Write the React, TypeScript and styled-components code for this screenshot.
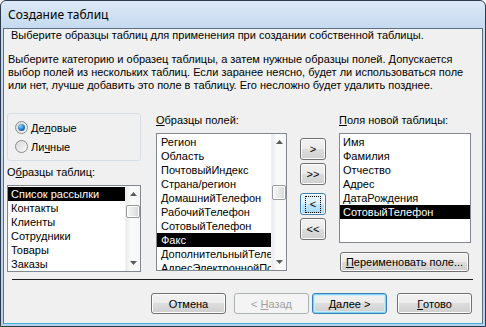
import React from 'react';
import styled, { createGlobalStyle } from 'styled-components';

const GlobalStyle = createGlobalStyle`
  html, body {
    margin: 0;
    padding: 0;
    background: #ffffff;
  }
  * {
    box-sizing: border-box;
  }
`;

const Window = styled.div`
  width: 486px;
  height: 327px;
  display: flex;
  flex-direction: column;
  border: 1px solid #2c3b4c;
  border-radius: 6px 6px 0 0;
  background: linear-gradient(#dce9f7 0px, #c6daf0 27px, #b9d1ec 100%);
  padding: 0 2px 2px 2px;
  font-family: 'Liberation Sans', Arial, sans-serif;
  font-size: 11px;
  color: #000;
  overflow: hidden;
`;

const TitleBar = styled.div`
  height: 27px;
  flex: 0 0 auto;
  display: flex;
  align-items: center;
  padding-left: 5px;
  font-family: 'Noto Sans', 'Open Sans', sans-serif;
  font-size: 12px;
  color: #000;
`;

const Client = styled.div`
  flex: 1 1 auto;
  display: flex;
  flex-direction: column;
  border: 1px solid #5d6f84;
  border-bottom-color: #3fb3d6;
  background: #f0f0f0;
`;

const HeaderText = styled.div`
  line-height: 12px;
  padding-left: 7px;
`;

const Intro = styled.div`
  margin-top: 12px;
  padding-left: 4px;
  line-height: 13px;
  height: 39px;
`;

const Main = styled.div`
  margin-top: 21px;
  padding-left: 3px;
  display: grid;
  grid-template-columns: 136px 131px 26px 132px;
  column-gap: 13px;
  align-items: start;
`;

const Column = styled.div`
  display: flex;
  flex-direction: column;
`;

const LeftColumn = styled(Column)`
  padding-right: 2px;
`;

const GroupBox = styled.div`
  height: 48px;
  border: 1px solid #d5dfe5;
  border-radius: 3px;
  padding: 7px 0 0 7px;
  display: flex;
  flex-direction: column;
  gap: 6px;
`;

const RadioRow = styled.label`
  display: flex;
  align-items: center;
  height: 13px;
  gap: 3px;
`;

const RadioCircle = styled.span<{ checked?: boolean }>`
  width: 13px;
  height: 13px;
  border-radius: 50%;
  border: 1px solid #8a8d90;
  background: linear-gradient(135deg, #d9d9d9, #f8f8f8);
  display: flex;
  align-items: center;
  justify-content: center;

  &:after {
    content: '';
    width: 7px;
    height: 7px;
    border-radius: 50%;
    display: ${({ checked }) => (checked ? 'block' : 'none')};
    background: radial-gradient(circle at 35% 30%, #8fd3ff, #1c70c4 60%, #0b3f7e);
  }
`;

const Label = styled.div<{ top?: number; bottom?: number }>`
  line-height: 13px;
  margin-top: ${({ top }) => top ?? 0}px;
  margin-bottom: ${({ bottom }) => bottom ?? 0}px;
  white-space: nowrap;
`;

const ListBox = styled.div<{ h: number }>`
  height: ${({ h }) => h}px;
  border: 1px solid #828790;
  background: #fff;
  display: flex;
  overflow: hidden;
`;

const Items = styled.div<{ indent?: number }>`
  flex: 1 1 auto;
  min-width: 0;
  padding-top: 1px;
  overflow: hidden;

  & > div {
    padding-left: ${({ indent }) => indent ?? 3}px;
  }
`;

const Item = styled.div<{ selected?: boolean }>`
  height: 14px;
  line-height: 14px;
  white-space: nowrap;
  overflow: hidden;
  background: ${({ selected }) => (selected ? '#000' : 'transparent')};
  color: ${({ selected }) => (selected ? '#fff' : '#000')};
`;

const ScrollBar = styled.div`
  width: 15px;
  flex: 0 0 auto;
  display: flex;
  flex-direction: column;
  background: linear-gradient(90deg, #ececec, #fbfbfb 40%, #f6f6f6);
  border-left: 1px solid #f0f0f0;
`;

const ScrollArrow = styled.div`
  height: 16px;
  flex: 0 0 auto;
  display: flex;
  align-items: center;
  justify-content: center;
`;

const Track = styled.div<{ offset: number }>`
  flex: 1 1 auto;
  padding-top: ${({ offset }) => offset}px;
`;

const Thumb = styled.div<{ h: number }>`
  height: ${({ h }) => h}px;
  border: 1px solid #9a9a9a;
  border-radius: 2px;
  background: linear-gradient(90deg, #f6f6f6, #e8e8e8 50%, #d8d8d8);
  box-shadow: inset 0 0 0 1px #fdfdfd;
`;

const ArrowColumn = styled.div`
  display: flex;
  flex-direction: column;
  padding-top: 25px;
`;

const Button = styled.div<{ w?: number; h?: number; variant?: 'default' | 'disabled' | 'focused' }>`
  width: ${({ w }) => w ?? 75}px;
  height: ${({ h }) => h ?? 21}px;
  display: flex;
  align-items: center;
  justify-content: center;
  border-radius: 3px;
  white-space: pre;
  border: 1px solid
    ${({ variant }) =>
      variant === 'disabled' ? '#adb2b5' : variant === 'default' || variant === 'focused' ? '#3c7fb1' : '#707070'};
  color: ${({ variant }) => (variant === 'disabled' ? '#a0a0a0' : '#000')};
  background: ${({ variant }) =>
    variant === 'disabled'
      ? '#f4f4f4'
      : variant === 'focused'
        ? 'linear-gradient(#eaf6fd, #d9f0fc 50%, #bee6fd 50%, #a7d9f5)'
        : 'linear-gradient(#f2f2f2, #ebebeb 50%, #dddddd 50%, #cfcfcf)'};
  box-shadow: ${({ variant }) =>
    variant === 'default'
      ? 'inset 0 0 0 1px #7ed3f5, inset 0 0 0 2px #c9ecfb'
      : variant === 'disabled'
        ? 'none'
        : 'inset 0 0 0 1px #fcfcfc'};
`;

const FocusRect = styled.span`
  outline: 1px dotted #000;
  padding: 2px 4px;
  line-height: 11px;
`;

const ArrowButton = styled(Button)<{ gap?: number }>`
  margin-top: ${({ gap }) => gap ?? 0}px;
`;

const Separator = styled.div`
  margin: 7px 9px 0 8px;
  height: 1px;
  background: #1e1e1e;
`;

const Footer = styled.div`
  margin-top: 13px;
  padding-right: 10px;
  display: flex;
  justify-content: flex-end;
`;

const FooterButton = styled(Button)<{ gap?: number }>`
  margin-left: ${({ gap }) => gap ?? 0}px;
`;

const RenameButton = styled(Button)`
  margin-top: 9px;
  margin-left: 1px;
`;

const Tri = ({ down }: { down?: boolean }) => (
  <svg width="7" height="4" viewBox="0 0 7 4">
    <path d={down ? 'M0 0 H7 L3.5 4 Z' : 'M0 4 H7 L3.5 0 Z'} fill="#5a5a5a" />
  </svg>
);

function Scroll({ offset, thumb }: { offset: number; thumb: number }) {
  return (
    <ScrollBar>
      <ScrollArrow>
        <Tri />
      </ScrollArrow>
      <Track offset={offset}>
        <Thumb h={thumb} />
      </Track>
      <ScrollArrow>
        <Tri down />
      </ScrollArrow>
    </ScrollBar>
  );
}

const tables = ['Список рассылки', 'Контакты', 'Клиенты', 'Сотрудники', 'Товары', 'Заказы'];

const fields = [
  'Регион',
  'Область',
  'ПочтовыйИндекс',
  'Страна/регион',
  'ДомашнийТелефон',
  'РабочийТелефон',
  'СотовыйТелефон',
  'Факс',
  'ДополнительныйТелефон',
  'АдресЭлектроннойПочты',
];

const newFields = ['Имя', 'Фамилия', 'Отчество', 'Адрес', 'ДатаРождения', 'СотовыйТелефон'];

export default function App() {
  return (
    <>
      <GlobalStyle />
      <Window>
        <TitleBar>Создание таблиц</TitleBar>
        <Client>
          <HeaderText>Выберите образцы таблиц для применения при создании собственной таблицы.</HeaderText>
          <Intro>
            Выберите категорию и образец таблицы, а затем нужные образцы полей. Допускается
            <br />
            выбор полей из нескольких таблиц. Если заранее неясно, будет ли использоваться поле
            <br />
            или нет, лучше добавить это поле в таблицу. Его несложно будет удалить позднее.
          </Intro>

          <Main>
            <LeftColumn>
              <GroupBox>
                <RadioRow>
                  <RadioCircle checked />
                  <span>
                    Де<u>л</u>овые
                  </span>
                </RadioRow>
                <RadioRow>
                  <RadioCircle />
                  <span>
                    Ли<u>ч</u>ные
                  </span>
                </RadioRow>
              </GroupBox>
              <Label top={5} bottom={6}>
                О<u>б</u>разцы таблиц:
              </Label>
              <ListBox h={87}>
                <Items>
                  {tables.map((t, i) => (
                    <Item key={t} selected={i === 0}>
                      {t}
                    </Item>
                  ))}
                </Items>
                <Scroll offset={3} thumb={13} />
              </ListBox>
            </LeftColumn>

            <Column>
              <Label top={1} bottom={6}>
                <u>О</u>бразцы полей:
              </Label>
              <ListBox h={138}>
                <Items indent={4}>
                  {fields.map((f, i) => (
                    <Item key={f} selected={i === 7}>
                      {f}
                    </Item>
                  ))}
                </Items>
                <Scroll offset={35} thumb={15} />
              </ListBox>
            </Column>

            <ArrowColumn>
              <ArrowButton w={26} h={22}>&gt;</ArrowButton>
              <ArrowButton w={26} h={22} gap={3}>&gt;&gt;</ArrowButton>
              <ArrowButton w={26} h={22} gap={8} variant="focused">
                <FocusRect>&lt;</FocusRect>
              </ArrowButton>
              <ArrowButton w={26} h={22} gap={3}>&lt;&lt;</ArrowButton>
            </ArrowColumn>

            <Column>
              <Label top={1} bottom={6}>
                <u>П</u>оля новой таблицы:
              </Label>
              <ListBox h={110}>
                <Items>
                  {newFields.map((f, i) => (
                    <Item key={f} selected={i === 5}>
                      {f}
                    </Item>
                  ))}
                </Items>
              </ListBox>
              <RenameButton w={129} h={20}>
                <u>П</u>ереименовать поле...
              </RenameButton>
            </Column>
          </Main>

          <Separator />

          <Footer>
            <FooterButton>Отмена</FooterButton>
            <FooterButton gap={8} variant="disabled">
              {'< '}
              <u>Н</u>азад
            </FooterButton>
            <FooterButton gap={3} variant="default">
              <u>Д</u>алее{' >'}
            </FooterButton>
            <FooterButton gap={10}>
              <u>Г</u>отово
            </FooterButton>
          </Footer>
        </Client>
      </Window>
    </>
  );
}
